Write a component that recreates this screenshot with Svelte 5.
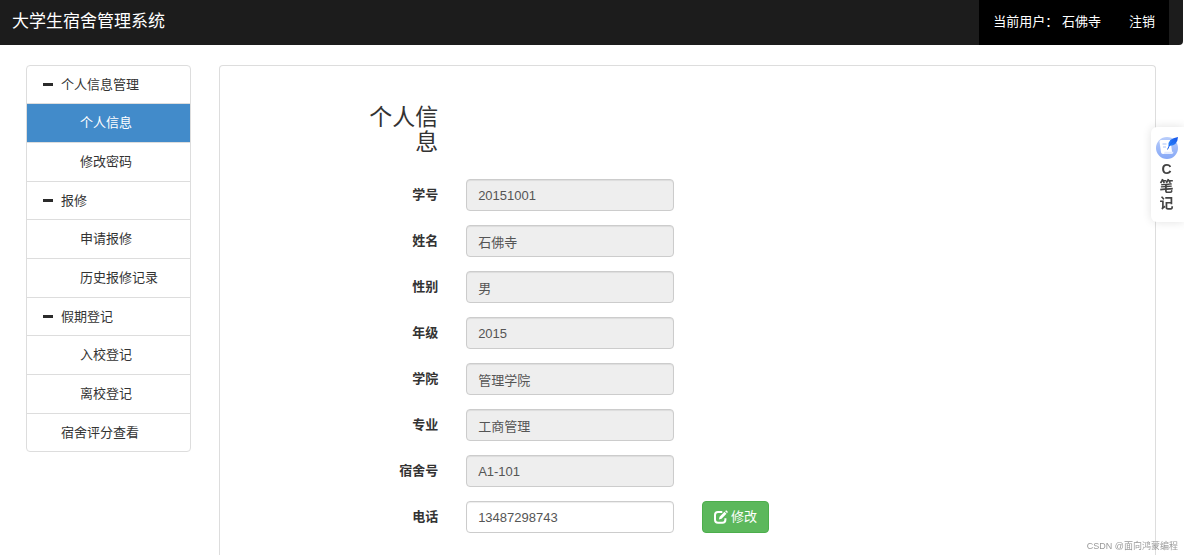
<script lang="ts">
  type MenuItem = { title: string; level: 'head' | 'sub' | 'plain' };

  const menu: MenuItem[] = [
    { title: '个人信息管理', level: 'head' },
    { title: '个人信息', level: 'sub' },
    { title: '修改密码', level: 'sub' },
    { title: '报修', level: 'head' },
    { title: '申请报修', level: 'sub' },
    { title: '历史报修记录', level: 'sub' },
    { title: '假期登记', level: 'head' },
    { title: '入校登记', level: 'sub' },
    { title: '离校登记', level: 'sub' },
    { title: '宿舍评分查看', level: 'plain' },
  ];

  const fields = [
    { id: 'number', label: '学号', value: '20151001' },
    { id: 'name', label: '姓名', value: '石佛寺' },
    { id: 'gender', label: '性别', value: '男' },
    { id: 'grade', label: '年级', value: '2015' },
    { id: 'college', label: '学院', value: '管理学院' },
    { id: 'major', label: '专业', value: '工商管理' },
    { id: 'dorm', label: '宿舍号', value: 'A1-101' },
  ];

  let current = $state('个人信息');
  let phone = $state('13487298743');
</script>

<div class="page">
  <header class="navbar">
    <a class="brand" href="#home">大学生宿舍管理系统</a>
    <nav class="user">
      <a href="#user">当前用户： 石佛寺</a>
      <a href="#logout">注销</a>
    </nav>
  </header>

  <div class="container">
    <nav class="sidebar">
      {#each menu as item}
        <a
          class="item {item.level}"
          class:active={item.title === current}
          href="#{item.title}"
          onclick={() => { if (item.level !== 'head') current = item.title; }}
        >
          {#if item.level === 'head'}<span class="minus"></span>{/if}
          {item.title}
        </a>
      {/each}
    </nav>

    <main class="panel">
      <form onsubmit={(e) => e.preventDefault()}>
        <div class="row title">
          <h2>个人信息</h2>
        </div>

        {#each fields as field}
          <div class="row">
            <label for={field.id}>{field.label}</label>
            <input id={field.id} type="text" value={field.value} readonly />
          </div>
        {/each}

        <div class="row">
          <label for="phone">电话</label>
          <input id="phone" type="text" bind:value={phone} />
          <button class="btn" type="submit">
            <svg width="14" height="14" viewBox="0 0 14 14" aria-hidden="true">
              <path d="M8.3 2H4Q1 2 1 5v4.800q0 3 3 3h4.400q3 0 3-3V8.200" fill="none" stroke="#fff" stroke-width="2" />
              <path d="M4.900 9.400l.7-2.700 4.900-4.900 2 2-4.900 4.900z" fill="#fff" />
              <path d="M11.100 1.200l.8-.8q.3-.3.6 0l1.300 1.300q.3.300 0 .6l-.8.8z" fill="#fff" />
            </svg>
            修改
          </button>
        </div>
      </form>
    </main>
  </div>

  <button class="note" type="button">
    <svg width="24" height="24" viewBox="0 0 24 24" aria-hidden="true">
      <defs>
        <linearGradient id="disc" x1="0" y1="0" x2="0" y2="1">
          <stop offset="0" stop-color="#b9cdfb" />
          <stop offset="1" stop-color="#86a8f6" />
        </linearGradient>
        <linearGradient id="quill" x1="1" y1="0" x2="0" y2="1">
          <stop offset="0" stop-color="#1550e6" />
          <stop offset="1" stop-color="#2d8cff" />
        </linearGradient>
      </defs>
      <circle cx="12" cy="13" r="11" fill="url(#disc)" />
      <path d="M4.500 6.500q0-1.500 1.500-1.500h9.500l1.500 11.500q.2 2.500-1.500 2.500H8q-1.800 0-2-1.800z" fill="#fff" />
      <path d="M8 19q1.700-.3 1.600-2.200h8.800q.2 2.200-1.900 2.200z" fill="#e3ebff" />
      <path d="M7.500 9h4M8 12h3" stroke="#a9c1f8" stroke-width="1" />
      <path d="M13.500 11Q12.500 3.500 23 2q-.5 8.500-8.500 9z" fill="url(#quill)" />
      <path d="M12.500 14.500Q14 9.500 18 6.500" stroke="#1c62ee" stroke-width="1" fill="none" />
    </svg>
    <span>C</span>
    <span>笔</span>
    <span>记</span>
  </button>

  <footer class="credit">CSDN @面向鸿蒙编程</footer>
</div>

<style>
  :global(body) {
    background: #fff;
  }

  .page {
    display: flex;
    flex-direction: column;
    height: 100vh;
    overflow: hidden;
    font-family: 'Liberation Sans', 'Noto Sans CJK SC', sans-serif;
    font-size: 13px;
    line-height: 18px;
    color: #333;
  }

  a {
    color: inherit;
    text-decoration: none;
  }

  .navbar {
    display: flex;
    flex: none;
    justify-content: space-between;
    height: 45px;
    margin-right: 1px;
    padding: 0 14px 0 12px;
    background: #1c1c1c;
    border-radius: 0 0 4px 0;
    color: #fff;
  }

  .brand {
    font-size: 17px;
    line-height: 44px;
  }

  .user {
    display: flex;
    gap: 28px;
    padding: 0 14px;
    background: #000;
    line-height: 43px;
  }

  .container {
    display: grid;
    flex: 1;
    grid-template-columns: 165fr 937fr;
    gap: 28px;
    margin-top: 20px;
    padding: 0 28px 0 26px;
  }

  .sidebar {
    align-self: start;
    border: 1px solid #ddd;
    border-radius: 4px;
    overflow: hidden;
  }

  .item {
    display: flex;
    align-items: center;
    box-sizing: border-box;
    height: 38px;
    padding-left: 34px;
    border-bottom: 1px solid #ddd;
  }

  .item:last-child {
    border-bottom: 0;
    height: 37px;
  }

  .head {
    gap: 8px;
    padding-left: 16px;
  }

  .sub {
    height: 39px;
    padding-left: 53px;
  }

  .active {
    background: #428bca;
    color: #fff;
  }

  .minus {
    width: 10px;
    height: 3px;
    background: #2b2b2b;
  }

  .panel {
    padding: 39px 0 0 14%;
    border: 1px solid #ddd;
    border-bottom: 0;
    border-radius: 4px 4px 0 0;
  }

  .row {
    display: grid;
    grid-template-columns: 87fr 208fr 453fr;
    align-items: center;
    gap: 28px;
    margin-bottom: 14px;
  }

  .title {
    margin-bottom: 24px;
  }

  h2 {
    margin: 0;
    font-size: 23px;
    font-weight: 400;
    line-height: 25px;
    text-align: right;
  }

  label {
    font-weight: 700;
    text-align: right;
  }

  input {
    box-sizing: border-box;
    width: 100%;
    height: 32px;
    padding: 0 11px;
    border: 1px solid #ccc;
    border-radius: 4px;
    box-shadow: inset 0 1px 1px rgba(0, 0, 0, 0.075);
    font: inherit;
    color: #555;
    background: #fff;
  }

  input[readonly] {
    background: #eee;
  }

  .btn {
    display: flex;
    justify-self: start;
    align-items: center;
    gap: 3px;
    height: 32px;
    padding: 0 11px;
    border: 1px solid #4cae4c;
    border-radius: 4px;
    background: #5cb85c;
    color: #fff;
    font: inherit;
    cursor: pointer;
  }

  .note {
    position: fixed;
    top: 127px;
    right: 0;
    display: flex;
    flex-direction: column;
    align-items: center;
    width: 33px;
    padding: 8px 4px 10px 2px;
    border: 0;
    border-radius: 6px 0 0 6px;
    background: #fff;
    box-shadow: 0 0 10px rgba(0, 0, 0, 0.12);
    color: #444;
    font: 700 14px/17px 'Liberation Sans', 'Noto Sans CJK SC', sans-serif;
    cursor: pointer;
  }

  .note svg {
    flex: none;
    margin-bottom: 2px;
  }

  .credit {
    position: fixed;
    right: 6px;
    bottom: 2px;
    font-size: 9px;
    line-height: 14px;
    color: #999;
  }
</style>
